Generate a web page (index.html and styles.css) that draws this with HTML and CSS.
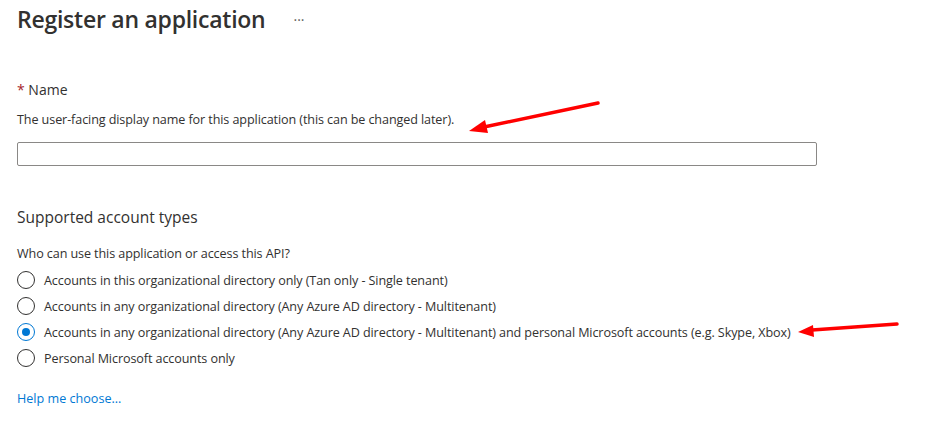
FILE: index.html
```html
<!DOCTYPE html>
<html>

<head>
    <title>Register an application</title>
    <link rel="stylesheet" href="styles.css">
</head>

<body>
    <div class="page">
        <div class="header">
            <h1>Register an application</h1>
            <span class="more">&middot;&middot;&middot;</span>
        </div>

        <div class="section name-section">
            <label class="label"><span class="req">*</span> Name</label>
            <p class="desc">The user-facing display name for this application (this can be changed later).</p>
            <input class="text-input" type="text">
        </div>

        <div class="section account-section">
            <h2>Supported account types</h2>
            <p class="desc">Who can use this application or access this API?</p>
            <div class="radios">
                <label class="radio"><span class="dot"></span>Accounts in this organizational directory only (Tan only - Single tenant)</label>
                <label class="radio"><span class="dot"></span>Accounts in any organizational directory (Any Azure AD directory - Multitenant)</label>
                <label class="radio checked"><span class="dot"></span>Accounts in any organizational directory (Any Azure AD directory - Multitenant) and personal Microsoft accounts (e.g. Skype, Xbox)</label>
                <label class="radio"><span class="dot"></span>Personal Microsoft accounts only</label>
            </div>
            <a class="help" href="#">Help me choose...</a>
        </div>
    </div>

    <!-- red annotation arrows drawn over the form -->
    <svg class="arrows" width="927" height="421">
        <line x1="598" y1="103" x2="484" y2="127" stroke="#f00" stroke-width="3.5" stroke-linecap="round" />
        <polygon points="469,131 485,120 488,133" fill="#f00" />
        <line x1="897" y1="324" x2="812" y2="330" stroke="#f00" stroke-width="3.5" stroke-linecap="round" />
        <polygon points="798,332 813,325 814,337" fill="#f00" />
    </svg>
</body>

</html>
```

FILE: styles.css
```css
body {
    margin: 0;
    font-family: "Open Sans", "Noto Sans", sans-serif;
    color: #323130;
    background: white;
}

.page {
    padding: 0 17px;
}

.header {
    display: flex;
    align-items: center;
    height: 38px;
}

h1 {
    margin: 0;
    font-size: 23px;
    font-weight: 600;
    letter-spacing: -0.25px;
}

.more {
    margin-left: 28px;
    font-size: 14px;
    color: #605e5c;
}

.name-section {
    margin-top: 42px;
}

.account-section {
    margin-top: 40px;
}

.label {
    display: block;
    font-size: 14px;
    line-height: 20px;
}

.req {
    color: #a4262c;
}

.desc {
    margin: 10px 0 0;
    font-size: 12.6px;
    line-height: 20px;
    letter-spacing: -0.1px;
}

.account-section .desc {
    margin-top: 16px;
}

.text-input {
    display: block;
    box-sizing: border-box;
    margin-top: 12px;
    width: 800px;
    height: 24px;
    border: 1px solid #8a8886;
    border-radius: 2px;
    padding: 0 8px;
}

h2 {
    margin: 0;
    font-size: 15.5px;
    font-weight: 400;
    line-height: 22px;
}

.radios {
    margin-top: 3px;
    display: flex;
    flex-direction: column;
}

.radio {
    display: flex;
    align-items: center;
    height: 26px;
    font-size: 12.6px;
    letter-spacing: -0.1px;
}

.dot {
    width: 16px;
    height: 16px;
    border: 1px solid #323130;
    border-radius: 50%;
    margin-right: 9px;
    position: relative;
    flex: none;
}

.checked .dot {
    border-color: #0078d4;
}

.checked .dot::after {
    content: "";
    position: absolute;
    left: 4px;
    top: 4px;
    width: 8px;
    height: 8px;
    border-radius: 50%;
    background: #0078d4;
}

.help {
    display: inline-block;
    margin-top: 19px;
    font-size: 12.6px;
    color: #0078d4;
    text-decoration: none;
}

.arrows {
    position: absolute;
    left: 0;
    top: 0;
    pointer-events: none;
}
```
